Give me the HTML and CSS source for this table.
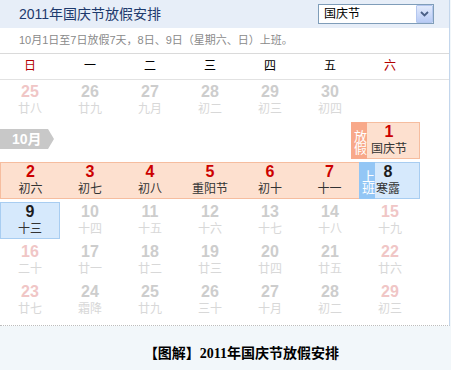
FILE: index.html
```html
<!DOCTYPE html>
<html lang="zh-CN">
<head>
<meta charset="utf-8">
<title>2011年国庆节放假安排</title>
<link rel="stylesheet" href="styles.css">
</head>
<body>
<div class="cal">
  <div class="head">
    <h1 class="title">2011年国庆节放假安排</h1>
    <div class="select">
      <span class="sel-text">国庆节</span>
      <span class="sel-btn"><svg width="9" height="6" viewBox="0 0 9 6"><path d="M1 1 L4.5 4.5 L8 1" fill="none" stroke="#4a5f86" stroke-width="1.8"/></svg></span>
    </div>
  </div>
  <div class="sub">10月1日至7日放假7天，8日、9日（星期六、日）上班。</div>
  <div class="week">
    <span class="we">日</span><span>一</span><span>二</span><span>三</span><span>四</span><span>五</span><span class="we">六</span>
  </div>
  <div class="grid">
    <div class="d pk"><b>25</b><i>廿八</i></div>
    <div class="d"><b>26</b><i>廿九</i></div>
    <div class="d"><b>27</b><i>九月</i></div>
    <div class="d"><b>28</b><i>初二</i></div>
    <div class="d"><b>29</b><i>初三</i></div>
    <div class="d"><b>30</b><i>初四</i></div>
    <div class="empty"></div>

    <div class="month">10月</div>
    <div class="ex off-ex">
      <span class="tag off"><span class="vt">放假</span></span>
      <div class="d hol rest"><b>1</b><i>国庆节</i></div>
    </div>

    <div class="d hol first"><b>2</b><i>初六</i></div>
    <div class="d hol mid"><b>3</b><i>初七</i></div>
    <div class="d hol mid"><b>4</b><i>初八</i></div>
    <div class="d hol mid"><b>5</b><i>重阳节</i></div>
    <div class="d hol mid"><b>6</b><i>初十</i></div>
    <div class="d hol last"><b>7</b><i>十一</i></div>
    <div class="ex on-ex">
      <span class="tag on"><span class="vt">上班</span></span>
      <div class="d work rest"><b>8</b><i>寒露</i></div>
    </div>

    <div class="d work"><b>9</b><i>十三</i></div>
    <div class="d"><b>10</b><i>十四</i></div>
    <div class="d"><b>11</b><i>十五</i></div>
    <div class="d"><b>12</b><i>十六</i></div>
    <div class="d"><b>13</b><i>十七</i></div>
    <div class="d"><b>14</b><i>十八</i></div>
    <div class="d pk"><b>15</b><i>十九</i></div>

    <div class="d pk"><b>16</b><i>二十</i></div>
    <div class="d"><b>17</b><i>廿一</i></div>
    <div class="d"><b>18</b><i>廿二</i></div>
    <div class="d"><b>19</b><i>廿三</i></div>
    <div class="d"><b>20</b><i>廿四</i></div>
    <div class="d"><b>21</b><i>廿五</i></div>
    <div class="d pk"><b>22</b><i>廿六</i></div>

    <div class="d pk"><b>23</b><i>廿七</i></div>
    <div class="d"><b>24</b><i>霜降</i></div>
    <div class="d"><b>25</b><i>廿九</i></div>
    <div class="d"><b>26</b><i>三十</i></div>
    <div class="d"><b>27</b><i>十月</i></div>
    <div class="d"><b>28</b><i>初二</i></div>
    <div class="d pk"><b>29</b><i>初三</i></div>
  </div>
</div>
<div class="foot">【图解】2011年国庆节放假安排</div>
</body>
</html>
```
FILE: styles.css
```css
html, body {
  margin: 0;
  padding: 0;
  background: #f2f7fa;
}
body {
  width: 451px;
  height: 370px;
  overflow: hidden;
  font-family: "Liberation Sans", "Noto Sans CJK SC", sans-serif;
}
.cal {
  width: 449px;
  background: #fff;
  border-right: 1px solid #c3d6ec;
  border-bottom: 1px dotted #bdbdbd;
}
.head {
  height: 28px;
  background: #e7eef8;
  display: flex;
  align-items: center;
  justify-content: space-between;
  padding: 0 15px 0 19px;
}
.title {
  margin: 0;
  font-size: 14px;
  font-weight: normal;
  color: #1e3a6d;
  line-height: 18px;
}
.select {
  box-sizing: border-box;
  width: 116px;
  height: 20px;
  background: #fff;
  border: 1px solid #7f9db9;
  display: flex;
  align-items: center;
  justify-content: space-between;
  padding-left: 5px;
}
.sel-text {
  font-size: 12px;
  color: #000;
  line-height: 16px;
}
.sel-btn {
  box-sizing: border-box;
  width: 17px;
  height: 18px;
  background: linear-gradient(#e2eafc, #b8cbf5);
  border: 1px solid #b4c7ef;
  border-radius: 1px;
  display: flex;
  align-items: center;
  justify-content: center;
}
.sub {
  height: 25px;
  border-bottom: 1px solid #dadada;
  padding-left: 19px;
  font-size: 11px;
  line-height: 25px;
  color: #8a8a8a;
}
.week {
  height: 25px;
  border-bottom: 1px solid #e2e2e2;
  display: grid;
  grid-template-columns: repeat(7, 60px);
  font-size: 12px;
  line-height: 25px;
  color: #000;
  text-align: center;
}
.week .we {
  color: #b30000;
}
.grid {
  display: grid;
  grid-template-columns: repeat(7, 60px);
  grid-auto-rows: 37px;
  row-gap: 3px;
  padding: 2px 0 6px;
}
.d {
  box-sizing: border-box;
  border: 1px solid transparent;
  text-align: center;
}
.d b {
  display: block;
  width: fit-content;
  margin: 0 auto;
  font-family: "Liberation Sans", Arial, sans-serif;
  font-weight: bold;
  font-size: 16px;
  line-height: 17px;
  color: #cdcdcd;
}
.d i {
  display: block;
  width: fit-content;
  margin: 0 auto;
  font-style: normal;
  font-size: 12px;
  line-height: 18px;
  color: #d8d8d8;
}
.d.pk b {
  color: #f0c6c6;
}
.hol {
  background: #fde0cf;
  border-color: #f6bd9f;
}
.hol b {
  color: #cc0000;
}
.hol i {
  color: #333;
}
.hol.first {
  border-right-width: 0;
}
.hol.mid {
  border-left-width: 0;
  border-right-width: 0;
}
.hol.last {
  border-left-width: 0;
}
.work {
  background: #d6e9fc;
  border-color: #a8cdf1;
}
.work b {
  color: #1c1c1c;
}
.work i {
  color: #333;
}
.ex {
  grid-column: 7;
  display: flex;
}
.off-ex {
  margin-left: -9px;
}
.on-ex {
  margin-left: -1px;
}
.rest {
  flex: 1;
  border-left-width: 0;
}
.off-ex .rest {
  padding-right: 8px;
}
.on-ex .rest {
  padding-right: 18px;
}
.tag {
  flex: none;
  width: 16px;
  color: #fff;
  display: flex;
  align-items: center;
  justify-content: center;
  padding-top: 2px;
  box-sizing: border-box;
}
.vt {
  writing-mode: vertical-rl;
  text-orientation: upright;
  font-size: 13px;
  line-height: 16px;
  letter-spacing: -1px;
}
.tag.off {
  background: #f8a98a;
}
.tag.on {
  background: #93c6f5;
}
.month {
  grid-column: 1 / 3;
  justify-self: start;
  align-self: start;
  margin-top: 7px;
  position: relative;
  width: 36px;
  height: 20px;
  padding-left: 12px;
  background: #c8c8c8;
  color: #fff;
  font-weight: bold;
  font-size: 14px;
  line-height: 20px;
}
.month::after {
  content: "";
  position: absolute;
  right: -6px;
  top: 0;
  border-left: 6px solid #c8c8c8;
  border-top: 10px solid transparent;
  border-bottom: 10px solid transparent;
}
.foot {
  padding: 20px 0 0 32px;
  text-align: center;
  font-family: "Liberation Serif", "Noto Sans CJK SC", serif;
  font-weight: bold;
  font-size: 14px;
  line-height: 16px;
  color: #000;
}
```
